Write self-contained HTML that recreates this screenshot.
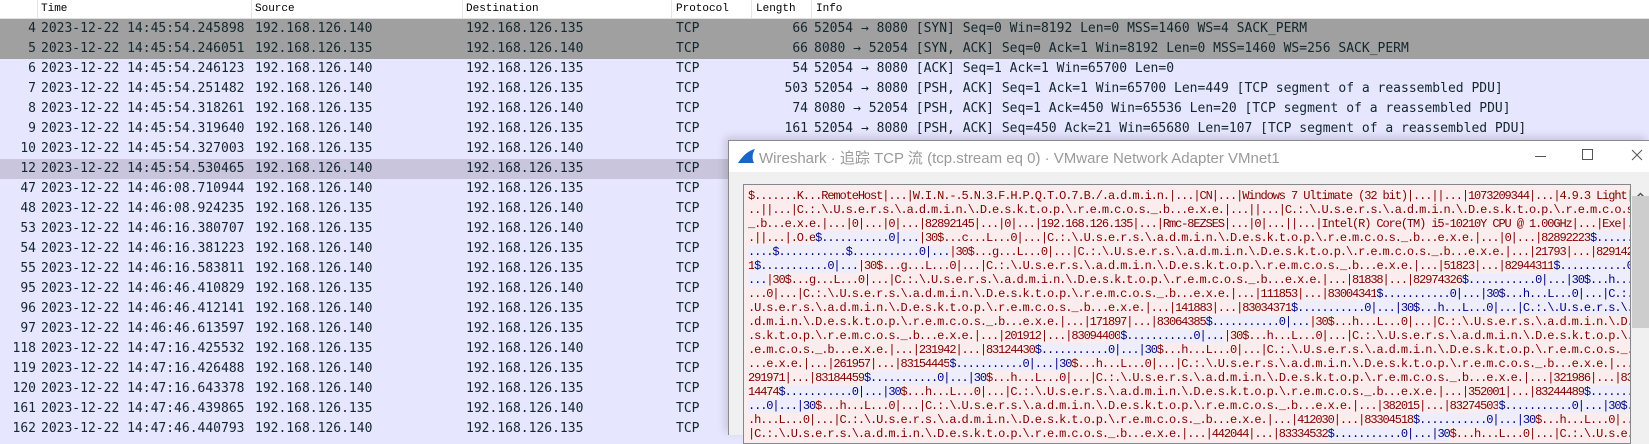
<!DOCTYPE html>
<html><head><meta charset="utf-8">
<style>
*{margin:0;padding:0;box-sizing:border-box}
body{width:1649px;height:435px;overflow:hidden;background:#e7e6ff;position:relative;font-family:"DejaVu Sans Mono","Liberation Mono",monospace}
.hdr{position:absolute;left:0;top:0;width:1649px;height:19px;background:#fff;border-bottom:1px solid #e0e0e0;font-family:"Liberation Mono",monospace;font-size:11px;color:#000}
.hdr span{position:absolute;top:3px}
.hdr i{position:absolute;top:0;width:1px;height:18px;background:#e5e5e5}
.row{position:absolute;left:0;width:1649px;height:20px;font-size:13px;line-height:20px;color:#12272e;white-space:pre}
.row span{position:absolute;top:0}
.no{right:1613px;text-align:right}
.ln{right:841px;text-align:right}
.dlg{position:absolute;left:728px;top:140px;width:921px;height:295px;background:#f0f0f0;border-left:1px solid #8a8a8a;border-top:1px solid #8a8a8a;box-shadow:-3px -3px 8px rgba(0,0,0,.15)}
.tb{position:absolute;left:0;top:0;width:921px;height:31px;background:#fff}
.ttl{position:absolute;left:30px;top:6px;font-family:"Liberation Sans","Noto Sans CJK SC",sans-serif;font-size:15px;color:#9a9a9a;white-space:nowrap}
.txt{position:absolute;left:14px;top:43px;width:888px;height:260px;background:#fbeded;border:1px solid #828790;overflow:hidden}
.ln2{position:absolute;left:4px;height:14px;font-family:"Liberation Mono",monospace;font-size:12px;letter-spacing:-1.1px;line-height:14px;white-space:pre;color:#7f0000}
.b{color:#00007f;background:#ededfb}
.sb{position:absolute;left:902px;top:43px;width:19px;height:260px;background:#f0f0f0}
</style></head><body>
<div class="hdr">
<i style="left:37px"></i><span style="left:41px">Time</span>
<i style="left:251px"></i><span style="left:255px">Source</span>
<i style="left:462px"></i><span style="left:466px">Destination</span>
<i style="left:671px"></i><span style="left:676px">Protocol</span>
<i style="left:751px"></i><span style="left:756px">Length</span>
<i style="left:811px"></i><span style="left:816px">Info</span>
</div>

<div class="row" style="top:19px;background:#a0a0a0"><span class="no">4</span><span style="left:41px">2023-12-22 14:45:54.245898</span><span style="left:255px">192.168.126.140</span><span style="left:466px">192.168.126.135</span><span style="left:676px">TCP</span><span class="ln">66</span><span style="left:814px">52054 → 8080 [SYN] Seq=0 Win=8192 Len=0 MSS=1460 WS=4 SACK_PERM</span></div>
<div class="row" style="top:39px;background:#a0a0a0"><span class="no">5</span><span style="left:41px">2023-12-22 14:45:54.246051</span><span style="left:255px">192.168.126.135</span><span style="left:466px">192.168.126.140</span><span style="left:676px">TCP</span><span class="ln">66</span><span style="left:814px">8080 → 52054 [SYN, ACK] Seq=0 Ack=1 Win=8192 Len=0 MSS=1460 WS=256 SACK_PERM</span></div>
<div class="row" style="top:59px"><span class="no">6</span><span style="left:41px">2023-12-22 14:45:54.246123</span><span style="left:255px">192.168.126.140</span><span style="left:466px">192.168.126.135</span><span style="left:676px">TCP</span><span class="ln">54</span><span style="left:814px">52054 → 8080 [ACK] Seq=1 Ack=1 Win=65700 Len=0</span></div>
<div class="row" style="top:79px"><span class="no">7</span><span style="left:41px">2023-12-22 14:45:54.251482</span><span style="left:255px">192.168.126.140</span><span style="left:466px">192.168.126.135</span><span style="left:676px">TCP</span><span class="ln">503</span><span style="left:814px">52054 → 8080 [PSH, ACK] Seq=1 Ack=1 Win=65700 Len=449 [TCP segment of a reassembled PDU]</span></div>
<div class="row" style="top:99px"><span class="no">8</span><span style="left:41px">2023-12-22 14:45:54.318261</span><span style="left:255px">192.168.126.135</span><span style="left:466px">192.168.126.140</span><span style="left:676px">TCP</span><span class="ln">74</span><span style="left:814px">8080 → 52054 [PSH, ACK] Seq=1 Ack=450 Win=65536 Len=20 [TCP segment of a reassembled PDU]</span></div>
<div class="row" style="top:119px"><span class="no">9</span><span style="left:41px">2023-12-22 14:45:54.319640</span><span style="left:255px">192.168.126.140</span><span style="left:466px">192.168.126.135</span><span style="left:676px">TCP</span><span class="ln">161</span><span style="left:814px">52054 → 8080 [PSH, ACK] Seq=450 Ack=21 Win=65680 Len=107 [TCP segment of a reassembled PDU]</span></div>
<div class="row" style="top:139px"><span class="no">10</span><span style="left:41px">2023-12-22 14:45:54.327003</span><span style="left:255px">192.168.126.135</span><span style="left:466px">192.168.126.140</span><span style="left:676px">TCP</span></div>
<div class="row" style="top:159px;background:#c8c5dc"><span class="no">12</span><span style="left:41px">2023-12-22 14:45:54.530465</span><span style="left:255px">192.168.126.140</span><span style="left:466px">192.168.126.135</span><span style="left:676px">TCP</span></div>
<div class="row" style="top:179px"><span class="no">47</span><span style="left:41px">2023-12-22 14:46:08.710944</span><span style="left:255px">192.168.126.140</span><span style="left:466px">192.168.126.135</span><span style="left:676px">TCP</span></div>
<div class="row" style="top:199px"><span class="no">48</span><span style="left:41px">2023-12-22 14:46:08.924235</span><span style="left:255px">192.168.126.135</span><span style="left:466px">192.168.126.140</span><span style="left:676px">TCP</span></div>
<div class="row" style="top:219px"><span class="no">53</span><span style="left:41px">2023-12-22 14:46:16.380707</span><span style="left:255px">192.168.126.135</span><span style="left:466px">192.168.126.140</span><span style="left:676px">TCP</span></div>
<div class="row" style="top:239px"><span class="no">54</span><span style="left:41px">2023-12-22 14:46:16.381223</span><span style="left:255px">192.168.126.140</span><span style="left:466px">192.168.126.135</span><span style="left:676px">TCP</span></div>
<div class="row" style="top:259px"><span class="no">55</span><span style="left:41px">2023-12-22 14:46:16.583811</span><span style="left:255px">192.168.126.140</span><span style="left:466px">192.168.126.135</span><span style="left:676px">TCP</span></div>
<div class="row" style="top:279px"><span class="no">95</span><span style="left:41px">2023-12-22 14:46:46.410829</span><span style="left:255px">192.168.126.135</span><span style="left:466px">192.168.126.140</span><span style="left:676px">TCP</span></div>
<div class="row" style="top:299px"><span class="no">96</span><span style="left:41px">2023-12-22 14:46:46.412141</span><span style="left:255px">192.168.126.140</span><span style="left:466px">192.168.126.135</span><span style="left:676px">TCP</span></div>
<div class="row" style="top:319px"><span class="no">97</span><span style="left:41px">2023-12-22 14:46:46.613597</span><span style="left:255px">192.168.126.140</span><span style="left:466px">192.168.126.135</span><span style="left:676px">TCP</span></div>
<div class="row" style="top:339px"><span class="no">118</span><span style="left:41px">2023-12-22 14:47:16.425532</span><span style="left:255px">192.168.126.135</span><span style="left:466px">192.168.126.140</span><span style="left:676px">TCP</span></div>
<div class="row" style="top:359px"><span class="no">119</span><span style="left:41px">2023-12-22 14:47:16.426488</span><span style="left:255px">192.168.126.140</span><span style="left:466px">192.168.126.135</span><span style="left:676px">TCP</span></div>
<div class="row" style="top:379px"><span class="no">120</span><span style="left:41px">2023-12-22 14:47:16.643378</span><span style="left:255px">192.168.126.140</span><span style="left:466px">192.168.126.135</span><span style="left:676px">TCP</span></div>
<div class="row" style="top:399px"><span class="no">161</span><span style="left:41px">2023-12-22 14:47:46.439865</span><span style="left:255px">192.168.126.135</span><span style="left:466px">192.168.126.140</span><span style="left:676px">TCP</span></div>
<div class="row" style="top:419px"><span class="no">162</span><span style="left:41px">2023-12-22 14:47:46.440793</span><span style="left:255px">192.168.126.140</span><span style="left:466px">192.168.126.135</span><span style="left:676px">TCP</span></div>

<div class="dlg">
 <div class="tb">
  <svg style="position:absolute;left:8px;top:7px" width="19" height="16" viewBox="0 0 19 16"><path d="M1 15 C5 9 10 3 18 1 C15 6 15 11 17 15 Z" fill="#1a64c8"/></svg>
  <div class="ttl">Wireshark · 追踪 TCP 流 (tcp.stream eq 0) · VMware Network Adapter VMnet1</div>
  <div style="position:absolute;left:806px;top:15px;width:11px;height:1px;background:#555"></div>
  <div style="position:absolute;left:853px;top:8px;width:11px;height:11px;border:1px solid #555"></div>
  <svg style="position:absolute;left:902px;top:8px" width="12" height="12" viewBox="0 0 12 12"><path d="M1 1L11 11M11 1L1 11" stroke="#555" stroke-width="1"/></svg>
 </div>
 <div class="txt">
<div class="ln2" style="top:4px">$.......K...RemoteHost|...|W.I.N.-.5.N.3.F.H.P.Q.T.O.7.B./.a.d.m.i.n.|...|CN|...|Windows 7 Ultimate (32 bit)|...||...|1073209344|...|4.9.3 Light|.</div>
<div class="ln2" style="top:18px">..||...|C.:.\.U.s.e.r.s.\.a.d.m.i.n.\.D.e.s.k.t.o.p.\.r.e.m.c.o.s._.b...e.x.e.|...||...|C.:.\.U.s.e.r.s.\.a.d.m.i.n.\.D.e.s.k.t.o.p.\.r.e.m.c.o.s.</div>
<div class="ln2" style="top:32px">_.b...e.x.e.|...|0|...|0|...|82892145|...|0|...|192.168.126.135|...|Rmc-8EZSES|...|0|...||...|Intel(R) Core(TM) i5-10210Y CPU @ 1.00GHz|...|Exe|..</div>
<div class="ln2" style="top:46px">.||...|.O.e<span class="b">$...........0|...</span>|30$...c...L...0|...|C.:.\.U.s.e.r.s.\.a.d.m.i.n.\.D.e.s.k.t.o.p.\.r.e.m.c.o.s._.b...e.x.e.|...|0|...|82892223<span class="b">$.......</span></div>
<div class="ln2" style="top:60px"><span class="b">....$...........$...........0|...</span>|30$...g...L...0|...|C.:.\.U.s.e.r.s.\.a.d.m.i.n.\.D.e.s.k.t.o.p.\.r.e.m.c.o.s._.b...e.x.e.|...|21793|...|8291428</div>
<div class="ln2" style="top:74px">1<span class="b">$...........0|...</span>|30$...g...L...0|...|C.:.\.U.s.e.r.s.\.a.d.m.i.n.\.D.e.s.k.t.o.p.\.r.e.m.c.o.s._.b...e.x.e.|...|51823|...|82944311<span class="b">$...........0|</span></div>
<div class="ln2" style="top:88px"><span class="b">...</span>|30$...g...L...0|...|C.:.\.U.s.e.r.s.\.a.d.m.i.n.\.D.e.s.k.t.o.p.\.r.e.m.c.o.s._.b...e.x.e.|...|81838|...|82974326<span class="b">$...........0|...|30$...h...L</span></div>
<div class="ln2" style="top:102px">...0|...|C.:.\.U.s.e.r.s.\.a.d.m.i.n.\.D.e.s.k.t.o.p.\.r.e.m.c.o.s._.b...e.x.e.|...|111853|...|83004341<span class="b">$...........0|...|30$...h...L...0|...|C.:.\</span></div>
<div class="ln2" style="top:116px">.U.s.e.r.s.\.a.d.m.i.n.\.D.e.s.k.t.o.p.\.r.e.m.c.o.s._.b...e.x.e.|...|141883|...|83034371<span class="b">$...........0|...|30$...h...L...0|...|C.:.\.U.s.e.r.s.\.a</span></div>
<div class="ln2" style="top:130px">.d.m.i.n.\.D.e.s.k.t.o.p.\.r.e.m.c.o.s._.b...e.x.e.|...|171897|...|83064385<span class="b">$...........0|...</span>|30$...h...L...0|...|C.:.\.U.s.e.r.s.\.a.d.m.i.n.\.D.e</div>
<div class="ln2" style="top:144px">.s.k.t.o.p.\.r.e.m.c.o.s._.b...e.x.e.|...|201912|...|83094400<span class="b">$...........0|...</span>|30$...h...L...0|...|C.:.\.U.s.e.r.s.\.a.d.m.i.n.\.D.e.s.k.t.o.p.\.r</div>
<div class="ln2" style="top:158px">.e.m.c.o.s._.b...e.x.e.|...|231942|...|83124430<span class="b">$...........0|...|30</span>$...h...L...0|...|C.:.\.U.s.e.r.s.\.a.d.m.i.n.\.D.e.s.k.t.o.p.\.r.e.m.c.o.s._.b</div>
<div class="ln2" style="top:172px">...e.x.e.|...|261957|...|83154445<span class="b">$...........0|...|30</span>$...h...L...0|...|C.:.\.U.s.e.r.s.\.a.d.m.i.n.\.D.e.s.k.t.o.p.\.r.e.m.c.o.s._.b...e.x.e.|...|</div>
<div class="ln2" style="top:186px">291971|...|83184459<span class="b">$...........0|...|30</span>$...h...L...0|...|C.:.\.U.s.e.r.s.\.a.d.m.i.n.\.D.e.s.k.t.o.p.\.r.e.m.c.o.s._.b...e.x.e.|...|321986|...|832</div>
<div class="ln2" style="top:200px">14474<span class="b">$...........0|...|30</span>$...h...L...0|...|C.:.\.U.s.e.r.s.\.a.d.m.i.n.\.D.e.s.k.t.o.p.\.r.e.m.c.o.s._.b...e.x.e.|...|352001|...|83244489<span class="b">$.......</span></div>
<div class="ln2" style="top:214px"><span class="b">...0|...|30</span>$...h...L...0|...|C.:.\.U.s.e.r.s.\.a.d.m.i.n.\.D.e.s.k.t.o.p.\.r.e.m.c.o.s._.b...e.x.e.|...|382015|...|83274503<span class="b">$...........0|...|30$..</span></div>
<div class="ln2" style="top:228px">.h...L...0|...|C.:.\.U.s.e.r.s.\.a.d.m.i.n.\.D.e.s.k.t.o.p.\.r.e.m.c.o.s._.b...e.x.e.|...|412030|...|83304518<span class="b">$...........0|...|30</span>$...h...L...0|...</div>
<div class="ln2" style="top:242px">|C.:.\.U.s.e.r.s.\.a.d.m.i.n.\.D.e.s.k.t.o.p.\.r.e.m.c.o.s._.b...e.x.e.|...|442044|...|83334532<span class="b">$...........0|...|30</span>$...h...L...0|...|C.:.\.U.s.e.r</div>
 </div>
 <div class="sb">
  <svg style="position:absolute;left:4px;top:8px" width="11" height="7" viewBox="0 0 11 7"><path d="M1 6L5.5 1.5L10 6" stroke="#555" stroke-width="1.5" fill="none"/></svg>
  <div style="position:absolute;left:1px;top:12px;width:17px;height:132px;background:#cdcdcd"></div>
 </div>
</div>
</body></html>
